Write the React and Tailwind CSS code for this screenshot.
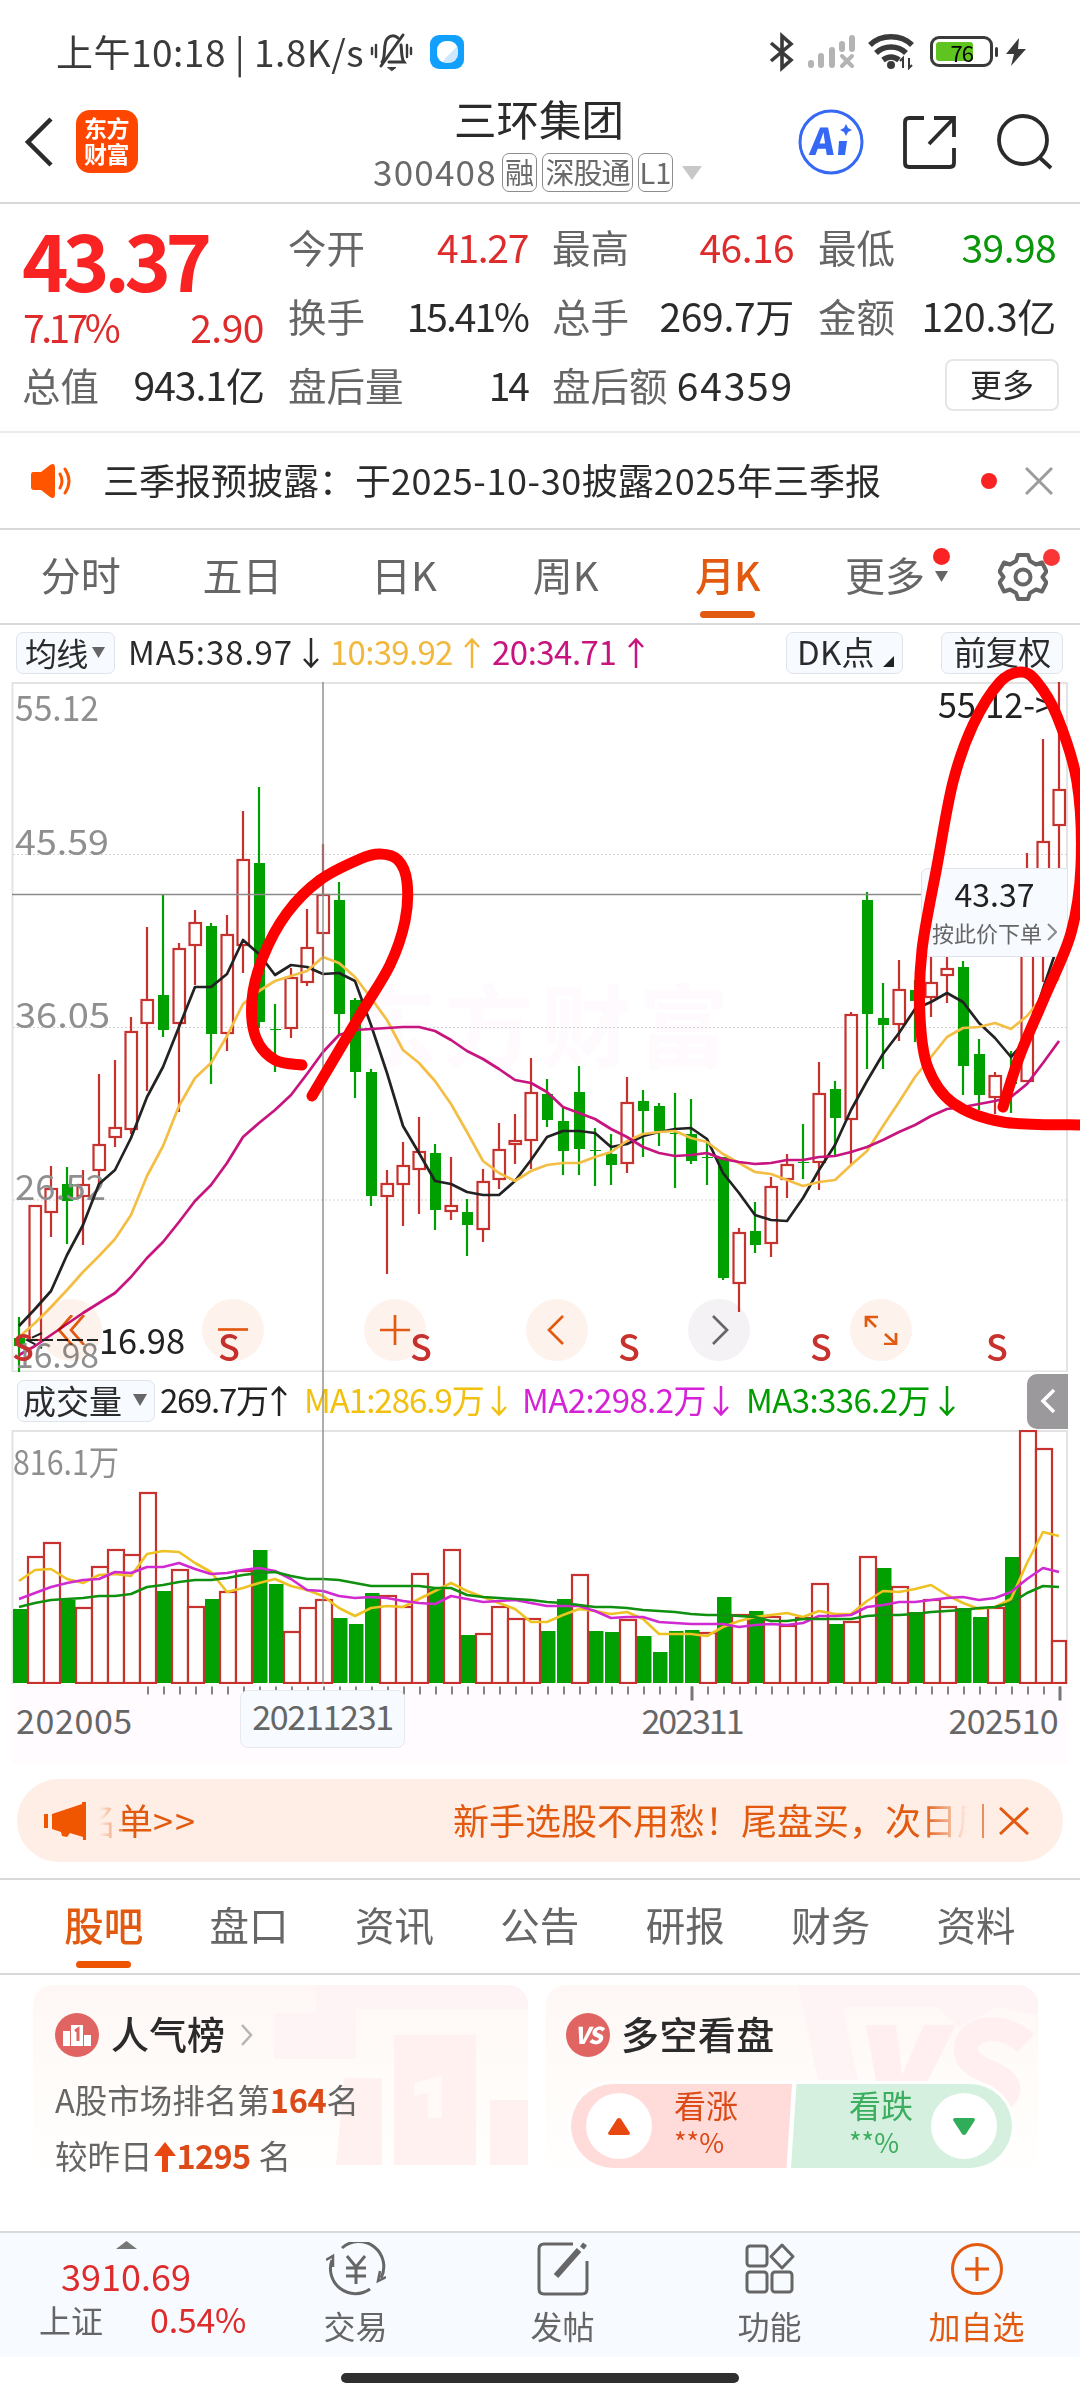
import React from 'react';

// [up, high, bodyTop, bodyBottom, low], in pixels below the chart frame
const candles = [
  [0, 635, 656, 664, 690], [1, 523, 523, 659, 659], [1, 484, 506, 531, 555], [0, 485, 502, 519, 562],
  [1, 488, 502, 515, 563], [1, 392, 462, 489, 502], [1, 378, 445, 456, 465], [1, 335, 349, 448, 452],
  [1, 245, 317, 342, 409], [0, 212, 313, 348, 355], [1, 261, 266, 342, 430], [1, 228, 240, 264, 303],
  [0, 241, 244, 352, 402], [1, 233, 252, 352, 369], [1, 129, 177, 264, 291], [0, 105, 181, 340, 346],
  [0, 322, 347, 348, 390], [1, 286, 295, 347, 356], [1, 227, 265, 301, 304], [1, 162, 212, 252, 274],
  [0, 200, 218, 332, 353], [0, 316, 318, 390, 416], [0, 387, 390, 514, 524], [1, 488, 501, 515, 592],
  [1, 460, 483, 503, 544], [1, 435, 469, 488, 532], [0, 462, 471, 528, 548], [1, 475, 523, 530, 538],
  [0, 517, 530, 543, 574], [1, 487, 499, 548, 560], [1, 441, 467, 498, 507], [1, 432, 458, 463, 482],
  [1, 376, 410, 459, 487], [0, 397, 412, 438, 445], [0, 424, 439, 469, 493], [0, 384, 410, 467, 493],
  [0, 446, 468, 469, 504], [0, 452, 472, 483, 503], [1, 395, 420, 482, 491], [0, 408, 419, 429, 475],
  [0, 421, 424, 449, 464], [0, 411, 451, 452, 506], [0, 417, 452, 479, 482], [0, 458, 475, 476, 503],
  [0, 475, 475, 596, 598], [1, 546, 550, 602, 630], [0, 520, 549, 563, 571], [1, 495, 504, 562, 575],
  [1, 472, 482, 498, 516], [0, 442, 480, 481, 497], [1, 380, 411, 481, 508], [0, 399, 407, 436, 473],
  [1, 330, 332, 438, 482], [0, 210, 218, 332, 387], [0, 301, 336, 343, 387], [1, 278, 307, 343, 359],
  [0, 298, 308, 319, 360], [1, 269, 300, 316, 335], [1, 269, 286, 294, 321], [0, 279, 285, 384, 413],
  [0, 357, 372, 413, 428], [1, 390, 393, 416, 432], [0, 369, 400, 402, 431], [1, 171, 222, 400, 400],
  [1, 57, 159, 260, 300], [1, 0, 107, 144, 220],
];

const ma5 = [
  644, 627, 609, 573, 543, 502, 488, 456, 415, 385, 345, 305, 305, 292, 258, 272, 293, 283, 285, 292, 291, 299,
  343, 391, 444, 471, 499, 502, 510, 513, 513, 499, 478, 455, 449, 449, 451, 465, 462, 454, 450, 447, 446, 457,
  491, 511, 533, 538, 539, 516, 488, 463, 428, 399, 372, 351, 327, 320, 311, 320, 341, 356, 375, 357, 307, 260,
];
const ma10 = [
  655, 641, 625, 608, 590, 574, 557, 533, 494, 464, 424, 396, 381, 354, 322, 309, 299, 294, 289, 275, 281, 295,
  316, 338, 368, 381, 399, 422, 450, 479, 491, 499, 489, 483, 481, 481, 475, 470, 459, 452, 450, 449, 456, 460,
  472, 481, 490, 492, 498, 504, 500, 498, 483, 469, 444, 420, 395, 375, 355, 346, 345, 341, 347, 334, 314, 296,
];
const ma20 = [
  673, 664, 653, 642, 631, 621, 611, 595, 576, 560, 540, 519, 503, 481, 455, 441, 428, 413, 392, 370, 353, 348,
  347, 346, 345, 345, 349, 358, 369, 377, 387, 398, 401, 410, 425, 431, 437, 447, 455, 465, 471, 474, 473, 471,
  477, 480, 482, 481, 478, 478, 475, 474, 470, 465, 458, 450, 443, 434, 427, 425, 422, 419, 415, 402, 381, 359,
];

// positive = rising month, negative = falling month
const volumes = [
  -74, 127, 141, -83, 76, 117, 134, 129, 191, -92, 114, 77, -84, 92, 113, -133, -99, 52, 76, 84, -65, -59,
  -90, 88, 77, 110, -94, 134, -48, 50, 77, 65, 65, -52, -84, 109, -52, -51, 64, -47, -31, -52, -53, 51,
  -86, 69, -72, 67, 58, 66, 100, -59, 62, 127, -115, 97, -71, 84, 77, -75, -66, 76, -126, 253, 235, 43,
];
const vol1 = [
  151, 140, 139, 149, 153, 145, 144, 146, 124, 121, 122, 133, 142, 162, 158, 153, 149, 156, 160, 166, 178, 186,
  178, 176, 177, 169, 161, 153, 161, 167, 173, 179, 192, 192, 185, 179, 181, 184, 182, 189, 204, 204, 204, 206,
  197, 191, 187, 185, 183, 187, 181, 184, 184, 171, 161, 162, 159, 155, 165, 173, 179, 177, 169, 133, 102, 106,
];
const vol2 = [
  169, 163, 157, 153, 150, 149, 142, 143, 137, 137, 133, 139, 144, 143, 140, 138, 141, 149, 160, 161, 166, 168,
  167, 168, 171, 173, 174, 166, 169, 172, 171, 170, 173, 176, 176, 176, 181, 188, 187, 187, 192, 193, 194, 194,
  194, 197, 195, 194, 195, 193, 186, 186, 185, 177, 175, 172, 172, 170, 168, 167, 170, 168, 162, 149, 138, 142,
];
const vol3 = [
  177, 173, 170, 169, 168, 166, 166, 164, 157, 155, 152, 150, 150, 148, 145, 143, 142, 146, 149, 149, 150, 153,
  156, 156, 156, 156, 158, 158, 165, 167, 168, 169, 170, 172, 173, 175, 177, 177, 178, 180, 181, 182, 184, 185,
  185, 186, 187, 191, 191, 189, 189, 189, 189, 186, 185, 185, 184, 182, 181, 180, 178, 177, 173, 163, 156, 157,
];

const RED = '#c7322f';
const GREEN = '#00a000';
const cx = (i) => 19 + i * 16;
const line = (arr) => arr.map((y, i) => `${cx(i)},${y}`).join(' ');

// smooth curve through a list of points
const smooth = (pts) => {
  let d = `M${pts[0][0]} ${pts[0][1]}`;
  for (let i = 0; i < pts.length - 1; i++) {
    const p0 = pts[i - 1] || pts[i];
    const p1 = pts[i];
    const p2 = pts[i + 1];
    const p3 = pts[i + 2] || p2;
    d += `C${p1[0] + (p2[0] - p0[0]) / 6} ${p1[1] + (p2[1] - p0[1]) / 6} ${p2[0] - (p3[0] - p1[0]) / 6} ${p2[1] - (p3[1] - p1[1]) / 6} ${p2[0]} ${p2[1]}`;
  }
  return d;
};

const loopLeft = smooth([
  [302, 1065], [275, 1060], [256, 1038], [252, 1000], [263, 957], [287, 913], [320, 880], [360, 859],
  [380, 854], [398, 860], [407, 882], [405, 921], [390, 965], [360, 1015], [312, 1096],
]);
const loopRight = smooth([
  [1003, 1107], [1020, 1055], [1046, 994], [1071, 933], [1081, 866], [1077, 782], [1057, 716], [1037, 682],
  [1021, 672], [1000, 682], [973, 725], [953, 782], [937, 866], [922, 950], [920, 1017], [928, 1068],
  [953, 1103], [1003, 1122], [1085, 1125],
]);

function StatusBar() {
  return (
    <div className="flex h-[100px] items-center pl-[56px] pt-[3px] text-[#3a3a3a]">
      <span className="w-[314px] whitespace-nowrap text-[37px] leading-none tracking-[0.500px]">上午10:18 | 1.8K/s</span>
      <svg width="44" height="40" viewBox="0 0 44 40" fill="none" stroke="currentColor" strokeWidth="3" strokeLinecap="round">
        <path d="M12 30C16 26 13 11 17 7c3-4 8-4 11-1M31 13c1 7 0 13 3 17H19" />
        <path d="M33 3L11 34" />
        <path d="M18 35.500h8l-4 3z" fill="currentColor" strokeWidth="1" />
        <path d="M6 13v12M2 16v6M37 13v12M41 16v6" strokeWidth="2.400" />
      </svg>
      <div className="ml-[16px] flex h-[34px] w-[34px] items-center justify-center rounded-[9px] bg-[#12a0ff]">
        <div className="h-[22px] w-[21px] rounded-[9px] bg-gradient-to-br from-white from-60% to-[#cfe8fb] to-60%"></div>
      </div>
      <svg className="ml-[304px]" width="28" height="40" viewBox="0 0 28 40" fill="none" stroke="currentColor" strokeWidth="3.600">
        <path d="M3 11l20 17-9 8V4l9 8L3 29" />
      </svg>
      <svg className="ml-[12px]" width="48" height="34" viewBox="0 0 48 34" stroke="#b4b4b4" strokeWidth="6" fill="none" strokeLinecap="round">
        <path d="M3 28v2M13 21v9M24 15v15M34 9v5M44 3v11" />
        <path d="M34 21l10 10M44 21L34 31" strokeWidth="4" />
      </svg>
      <svg className="ml-[12px]" width="48" height="36" viewBox="0 0 48 36" stroke="currentColor" strokeWidth="5.500" fill="none">
        <path d="M2 11C13 0 33 0 44 11M8 19c8-8 22-8 30 0M15 26c5-4 11-4 16 0" />
        <circle cx="23" cy="31" r="3" fill="currentColor" strokeWidth="2" />
        <path d="M35 34V24l-3 3M41 24v10l3-3" strokeWidth="2" />
      </svg>
      <div className="ml-[14px] flex h-[31px] w-[63px] items-center rounded-[9px] border-[3px] border-[#3a3a3a] p-[3px]">
        <div className="flex h-full w-[37px] items-center justify-end rounded-[3px] bg-[#5fc41f] text-[22px] leading-none tracking-[-1px] text-black">76</div>
      </div>
      <div className="ml-[2px] h-[10px] w-[3px] rounded bg-[#3a3a3a]"></div>
      <svg className="ml-[8px]" width="20" height="28" viewBox="0 0 20 28" fill="currentColor"><path d="M13 0L0 16h8l-3 12L20 11h-8z" /></svg>
    </div>
  );
}

function Header() {
  return (
    <div className="flex h-[104px] items-start border-b-2 border-[#d9d9d9] pl-[24px] text-[#2b2b2b]">
      <svg className="mt-[17px]" width="30" height="50" viewBox="0 0 30 50" fill="none" stroke="currentColor" strokeWidth="4.500"><path d="M27 2L4 25l23 23" /></svg>
      <div className="ml-[22px] mt-[10px] flex h-[63px] w-[62px] items-center justify-center rounded-[14px] bg-[#ff4600]">
        <span className="w-[46px] pb-[3px] text-[23px] font-bold leading-[26px] tracking-[-0.500px] text-white">东方财富</span>
      </div>
      <div className="ml-[235px] w-[332px]">
        <div className="mt-[-3px] pl-[81px] text-[42.500px] leading-[42px]">三环集团</div>
        <div className="mt-[14px] flex h-[39px] items-center text-[#6a6a6a]">
          <span className="w-[129px] pb-[4px] text-[35px] leading-none tracking-[1.200px]">300408</span>
          <div className="flex gap-[5px] text-[29px] leading-none">
            <span className="flex h-[39px] w-[35px] items-center justify-center rounded-[7px] border-[1.500px] border-[#8c8c8c] pb-[3px]">融</span>
            <span className="flex h-[39px] w-[91px] items-center justify-center rounded-[7px] border-[1.500px] border-[#8c8c8c] pb-[3px] tracking-[-1px]">深股通</span>
            <span className="flex h-[39px] w-[35px] items-center justify-center rounded-[7px] border-[1.500px] border-[#8c8c8c] pb-[3px]">L1</span>
          </div>
          <svg className="ml-[9px]" width="20" height="14" viewBox="0 0 20 14" fill="#c8c8c8"><path d="M0 0h20L10 14z" /></svg>
        </div>
      </div>
      <svg className="ml-[93px] mt-[8px]" width="66" height="68" viewBox="0 0 66 68">
        <circle cx="33" cy="34" r="31" fill="none" stroke="#3568f5" strokeWidth="3" />
        <text x="12" y="47" fontSize="37" fontWeight="900" fill="#3568f5" transform="skewX(-6) translate(4 0)">A</text>
        <path d="M41 33h8l-2 14h-7z" fill="#3568f5" />
        <path d="M48 16l2 4 4 2-4 2-2 4-2-4-4-2 4-2z" fill="#3568f5" />
      </svg>
      <svg className="ml-[39px] mt-[15px]" width="54" height="54" viewBox="0 0 54 54" fill="none" stroke="currentColor" strokeWidth="3.800">
        <path d="M21 3H6Q2 3 2 7v41q0 4 4 4h41q4 0 4-4V33" />
        <path d="M31 3h20v19M51 3L26 29" />
      </svg>
      <svg className="ml-[40px] mt-[14px]" width="56" height="56" viewBox="0 0 56 56" fill="none" stroke="currentColor" strokeWidth="3.800">
        <circle cx="26" cy="26" r="24" />
        <path d="M42 43l12 11" />
      </svg>
    </div>
  );
}

function Stat({ label, value, color = 'text-[#2b2b2b]', spacing = 'tracking-[-1.300px]' }) {
  return (
    <div className="flex items-center justify-between whitespace-nowrap">
      <span className="-ml-px text-[38.500px] leading-none text-[#666]">{label}</span>
      <span className={`text-[39px] leading-none ${color} ${spacing}`}>{value}</span>
    </div>
  );
}

function Quote() {
  return (
    <div className="grid h-[229px] auto-rows-[69px] grid-cols-[241px_239px_241px_237px] gap-x-[25px] border-b-2 border-[#ebebeb] pl-[23px] pt-[8px]">
      <div className="row-span-2">
        <div className="-ml-px text-[79px] font-bold leading-[92px] tracking-[-5.500px] text-[#fa2323]">43.37</div>
        <div className="flex justify-between text-[39px] leading-[44px] text-[#de2c2c]">
          <span className="tracking-[-3.500px]">7.17%</span>
          <span className="tracking-[-0.500px]">2.90</span>
        </div>
      </div>
      <Stat label="今开" value="41.27" color="text-[#de2c2c]" />
      <Stat label="最高" value="46.16" color="text-[#de2c2c]" spacing="tracking-[-0.600px]" />
      <Stat label="最低" value="39.98" color="text-[#0a960a]" spacing="tracking-[-0.600px]" />
      <Stat label="换手" value="15.41%" spacing="tracking-[-2px]" />
      <Stat label="总手" value="269.7万" spacing="tracking-[-0.300px]" />
      <Stat label="金额" value="120.3亿" spacing="tracking-[-0.300px]" />
      <Stat label="总值" value="943.1亿" spacing="tracking-[-1px]" />
      <Stat label="盘后量" value="14" spacing="tracking-[-2px]" />
      <Stat label="盘后额" value="64359" spacing="tracking-[1.800px]" />
      <div className="flex items-center justify-end">
        <span className="mr-[-3px] flex h-[52px] w-[114px] items-center justify-center rounded-[8px] border-2 border-[#e6e6e6] pb-[3px] text-[32px] leading-none text-[#2b2b2b]">更多</span>
      </div>
    </div>
  );
}

function Notice() {
  return (
    <div className="flex h-[97px] items-center border-b-2 border-[#d9d9d9] pl-[31px]">
      <svg width="42" height="34" viewBox="0 0 42 34" fill="#ff5500">
        <path d="M2 8h8L19 1q5-3 5 3v26q0 6-5 3l-9-7H3q-3 0-3-3V11q0-3 2-3z" />
        <path d="M29 10q4 7 0 14M34 5q8 12 0 24" fill="none" stroke="#ff5500" strokeWidth="3" strokeLinecap="round" />
      </svg>
      <span className="ml-[30px] w-[801px] whitespace-nowrap pb-[3px] text-[36px] leading-none text-[#2b2b2b]">
        三季报预披露：于<span className="tracking-[0.600px]">2025-10-30</span>披露<span className="tracking-[0.800px]">2025</span>年三季报
      </span>
      <span className="ml-[77px] h-[16px] w-[16px] rounded-full bg-[#fa2323]"></span>
      <svg className="ml-[28px]" width="28" height="28" viewBox="0 0 28 28" stroke="#9c9c9c" strokeWidth="3"><path d="M1 1l26 26M27 1L1 27" /></svg>
    </div>
  );
}

const periods = ['分时', '五日', '日K', '周K', '月K'];

function PeriodTabs() {
  return (
    <div className="flex h-[95px] border-b-2 border-[#d9d9d9] text-[40px] leading-[88px] text-[#666]">
      {periods.map((p) => (
        <div key={p} className={`flex w-[161.600px] flex-col items-center ${p === '月K' ? 'font-medium text-[#e25a10]' : ''}`}>
          <span className={`h-[81px] ${p === '月K' ? 'tracking-[-1px]' : ''}`}>{p}</span>
          {p === '月K' && <span className="h-[7px] w-[55px] rounded-full bg-[#e25a10]"></span>}
        </div>
      ))}
      <div className="relative ml-[37px] flex">
        <span>更多</span>
        <svg className="ml-[10px] mt-[41px]" width="13" height="11" viewBox="0 0 13 11" fill="#666"><path d="M0 0h13L6.500 11z" /></svg>
        <span className="absolute right-[-2px] top-[18px] h-[17px] w-[17px] rounded-full bg-[#fa2323]"></span>
      </div>
      <div className="relative ml-[50px] mt-[22px] h-[50px] w-[50px]">
        <svg width="50" height="50" viewBox="0 0 50 50" fill="none" stroke="#666" strokeWidth="4" strokeLinejoin="round">
          <path d="M20 3h10l2 6 6 3.500 6-2 4.500 9-4 5.500 4 5.500-4.500 9-6-2-6 3.500-2 6H20l-2-6-6-3.500-6 2-4.500-9 4-5.500-4-5.500 4.500-9 6 2L18 9z" />
          <circle cx="25" cy="25" r="7.500" />
        </svg>
        <span className="absolute right-[-12px] top-[-3px] h-[17px] w-[17px] rounded-full bg-[#fa3535]"></span>
      </div>
    </div>
  );
}

function Pill({ className, children }) {
  return (
    <span className={`flex h-[42px] items-center rounded-[7px] border border-[#dfe4ec] bg-[#f7faff] text-[#2b2b2b] ${className}`}>{children}</span>
  );
}

function Arrow({ up, className = '' }) {
  return (
    <svg className={className} width="16" height="30" viewBox="0 0 16 30" fill="none" stroke="currentColor" strokeWidth="2.500">
      <path d={up ? 'M8 30V2M1 9l7-7.500L15 9' : 'M8 0v28M1 21l7 7.500 7-7.500'} />
    </svg>
  );
}

function Legend({ color, width, up, children }) {
  return (
    <span className={`flex items-center justify-between whitespace-nowrap ${color} ${width}`}>
      <span className="pb-[3px]">{children}</span>
      <Arrow up={up} />
    </span>
  );
}

function MaRow() {
  return (
    <div className="flex h-[57px] items-center pb-[2px] pl-[16px] text-[33px] leading-none tracking-[-0.700px]">
      <Pill className="w-[99px] pb-[2px] pl-[8px] text-[32px] tracking-[-0.700px]">
        均线
        <svg className="ml-[4px] mt-[2px]" width="13" height="11" viewBox="0 0 13 11" fill="#666"><path d="M0 0h13L6.500 11z" /></svg>
      </Pill>
      <Legend color="ml-[13px] text-[#2b2b2b]" width="w-[191px] tracking-[0.900px]">MA5:38.97</Legend>
      <Legend color="ml-[11px] text-[#f2b83d]" width="w-[150px]" up>10:39.92</Legend>
      <Legend color="ml-[12px] text-[#c7147f]" width="w-[152px] tracking-[-0.500px]" up>20:34.71</Legend>
      <Pill className="ml-[142px] w-[117px] pb-[2px] pl-[10px] tracking-[0.300px]">
        DK点
        <svg className="ml-[8px] mt-[19px]" width="11" height="11" viewBox="0 0 11 11" fill="#222"><path d="M11 0v11H0z" /></svg>
      </Pill>
      <Pill className="ml-[38px] w-[122px] justify-center pb-[2px]">前复权</Pill>
    </div>
  );
}

function Label({ x, y, w, size = 35, fill = '#8f8f8f', children }) {
  return <text x={x} y={y} textLength={w} lengthAdjust="spacingAndGlyphs" fontSize={size} fill={fill}>{children}</text>;
}

function KLine() {
  return (
    <svg className="block" width="1080" height="690" viewBox="0 0 1080 690">
      <text x="347" y="378" fontSize="90" fontWeight="700" letterSpacing="7" fill="#fefafe">东方财富</text>
      <path d="M12.500 1V689.500H1067V1z" fill="none" stroke="#e3e3e3" strokeWidth="2" />
      {[172.500, 345.500, 518].map((y) => <path key={y} d={`M13 ${y}H1067`} stroke="#d4d4d4" strokeDasharray="2 2" />)}
      <Label x="15" y="39" w="84">55.12</Label>
      <Label x="15" y="173" w="94">45.59</Label>
      <Label x="15" y="346" w="95">36.05</Label>
      {candles.map(([up, h, t, b, l], i) => (
        <g key={i} stroke={up ? RED : GREEN} strokeWidth="2.200">
          <path d={`M${cx(i)} ${h}V${t}M${cx(i)} ${b}V${l}`} />
          {up
            ? <rect x={cx(i) - 5.500} y={t + 1} width="11.500" height={Math.max(b - t - 2, 1)} fill="none" />
            : <rect x={cx(i) - 5} y={t} width="11" height={b - t} fill={GREEN} stroke="none" />}
        </g>
      ))}
      <Label x="15" y="518" w="91">26.52</Label>
      <g fill="none" strokeWidth="2.700" strokeLinejoin="round">
        <polyline points={line(ma5)} stroke="#222" />
        <polyline points={line(ma10)} stroke="#f4be45" />
        <polyline points={line(ma20)} stroke="#c7147f" />
      </g>
      <path d="M42 651l-15 7 15 8M27 658h72" stroke="#222" strokeWidth="2" strokeDasharray="11 4" fill="none" />
      <Label x="15" y="686" w="84">16.98</Label>
      <Label x="99" y="672" w="86" fill="#222">16.98</Label>
      <Label x="938" y="36" w="116" fill="#222">55.12-&gt;</Label>
      {[23, 229, 421, 629, 821, 997].map((x) => (
        <text key={x} x={x} y="679" textAnchor="middle" fontSize="36" fontWeight="500" fill="#c7322f">S</text>
      ))}
      <path d="M12 212.500H1067" stroke="#8a8a8a" strokeWidth="1.500" />
    </svg>
  );
}

const controls = [
  'M26 0L13 15l13 15M38 0L25 15l13 15',
  'M10 14.500h30',
  'M10 15h30M25 0v30',
  'M31 1L17 15l14 14',
  'M19 1l14 14-14 14',
  'M10 12V2h12M10 2l10 10M40 18v11H28M40 29L29 19',
];

function Controls() {
  return (
    <div className="absolute left-[40px] top-[617px] flex gap-[100px] mix-blend-multiply">
      {controls.map((d, i) => (
        <span key={i} className={`flex h-[62px] w-[62px] items-center justify-center rounded-full ${i === 4 ? 'bg-[#f5f2f6] text-[#666]' : 'bg-[#fef2ed] text-[#e25a10]'}`}>
          <svg width="50" height="30" viewBox="0 0 50 30" fill="none" stroke="currentColor" strokeWidth="2.700"><path d={d} /></svg>
        </span>
      ))}
    </div>
  );
}

function PriceTip() {
  return (
    <div className="absolute left-[921px] top-[186px] h-[89px] w-[147px] rounded-l-[7px] border border-[#dfe4ec] bg-[#f7faff] text-center">
      <div className="pt-[4px] text-[32px] leading-[40px] text-[#222]">43.37</div>
      <div className="flex items-center justify-end gap-[5px] pr-[10px] text-[22px] leading-[38px] text-[#666]">
        <span>按此价下单</span>
        <svg width="10" height="18" viewBox="0 0 10 18" fill="none" stroke="#888" strokeWidth="2"><path d="M1 1l8 8-8 8" /></svg>
      </div>
    </div>
  );
}

function VolumeHeader() {
  return (
    <div className="flex h-[58px] items-center pl-[17px] text-[33px] leading-none tracking-[-1px]">
      <Pill className="w-[138px] pb-[2px] pl-[5px] tracking-normal">
        成交量
        <svg className="ml-[11px]" width="14" height="12" viewBox="0 0 13 11" fill="#666"><path d="M0 0h13L6.500 11z" /></svg>
      </Pill>
      <Legend color="ml-[5px] text-[#222]" width="w-[127px] tracking-[-1.300px]" up>269.7万</Legend>
      <Legend color="ml-[17px] text-[#f2c00f]" width="w-[203px]">MA1:286.9万</Legend>
      <Legend color="ml-[15px] text-[#d622d6]" width="w-[207px] tracking-[-0.600px]">MA2:298.2万</Legend>
      <Legend color="ml-[17px] text-[#009c00]" width="w-[209px] tracking-[-0.600px]">MA3:336.2万</Legend>
      <span className="ml-[72px] flex h-[55px] w-[41px] items-center justify-center rounded-l-[10px] bg-[#9b999b]">
        <svg width="16" height="26" viewBox="0 0 16 26" fill="none" stroke="#fff" strokeWidth="3.500"><path d="M14 2L3 13l11 11" /></svg>
      </span>
    </div>
  );
}

function Volume() {
  return (
    <svg className="block" width="1080" height="254" viewBox="0 0 1080 254">
      <path d="M12.500 254V1H1067V254" fill="none" stroke="#e3e3e3" strokeWidth="2" />
      <Label x="13" y="45" w="106" size={34}>816.1万</Label>
      {volumes.map((v, i) => (v > 0
        ? <rect key={i} x={cx(i) - 7} y={254 - v} width={i === 65 ? 14 : 16} height={v - 1} fill="#fff" stroke={RED} strokeWidth="2.200" />
        : <rect key={i} x={cx(i) - 6} y={253 + v} width="14.500" height={-v} fill={GREEN} />))}
      <g fill="none" strokeWidth="2.600" strokeLinejoin="round">
        <polyline points={line(vol1)} stroke="#efc223" />
        <polyline points={line(vol2)} stroke="#d02ad0" />
        <polyline points={line(vol3)} stroke="#10900f" />
      </g>
    </svg>
  );
}

function Axis() {
  return (
    <div className="relative ml-[12px] h-[79px] w-[1056px] bg-[#fffbff] text-[34px] leading-none text-[#666]">
      <svg className="absolute left-0 top-0" width="1056" height="20" viewBox="12 0 1056 20" stroke="#777">
        {candles.map((_, i) => i > 7 && <path key={i} d={`M${cx(i) + 1} 2.500v8`} strokeWidth="1.800" />)}
        <path d="M692 2.500v14M1060 2.500v14" strokeWidth="3" />
      </svg>
      <div className="flex h-[72px] items-center justify-between pl-[4px] pr-[10px]">
        <span className="w-[224px] tracking-[0.600px]">202005</span>
        <span className="relative -top-[1px] flex h-[58px] w-[165px] items-center justify-center rounded-[8px] border border-[#e6eaf0] bg-[#f7faff] pb-[6px] tracking-[-1.300px]">20211231</span>
        <span className="ml-[132px] w-[310px] text-center tracking-[-2px]">202311</span>
        <span className="flex-1 text-right tracking-[-0.600px]">202510</span>
      </div>
    </div>
  );
}

function Banner() {
  return (
    <div className="border-b-2 border-[#d9d9d9] pb-[16px] pl-[17px] pt-[16px]">
      <div className="flex h-[83px] w-[1046px] items-center rounded-full bg-[#ffeee6] pl-[27px] text-[#e25a10]">
        <svg width="43" height="38" viewBox="0 0 43 38" fill="#f05500">
          <path d="M0 12h4v14H0zM8 12L38 2v-2h4v38h-3v-3l-13-4-3 4-5-1-1-4-9-3z" />
        </svg>
        <div className="relative ml-[12px] flex w-[880px] overflow-hidden whitespace-nowrap pb-[4px] text-[36px] leading-[44px]">
          <span className="ml-[-18px]">名单<span className="tracking-[2px]">&gt;&gt;</span></span>
          <span className="absolute left-[354px]">新手选股不用愁！尾盘买，次日尾</span>
          <span className="absolute left-0 top-0 h-full w-[24px] bg-gradient-to-r from-[#ffeee6] to-[#ffeee6]/30"></span>
          <span className="absolute right-0 top-0 h-full w-[56px] bg-gradient-to-r from-[#ffeee6]/0 to-[#ffeee6] to-80%"></span>
        </div>
        <span className="ml-[3px] h-[34px] w-[2px] bg-[#e98e5c]"></span>
        <svg className="ml-[15px]" width="30" height="28" viewBox="0 0 30 28" stroke="currentColor" strokeWidth="3"><path d="M1 1l28 26M29 1L1 27" /></svg>
      </div>
    </div>
  );
}

const sections = ['股吧', '盘口', '资讯', '公告', '研报', '财务', '资料'];

function SectionTabs() {
  return (
    <div className="flex h-[95px] border-b-2 border-[#d9d9d9] pl-[31px] text-[39.500px] leading-[88px] text-[#666]">
      {sections.map((s, i) => (
        <div key={s} className={`flex w-[145.400px] flex-col items-center ${i === 0 ? 'font-medium text-[#e25a10]' : ''}`}>
          <span className="h-[81px]">{s}</span>
          {i === 0 && <span className="h-[7px] w-[55px] rounded-full bg-[#ee5500]"></span>}
        </div>
      ))}
    </div>
  );
}

function Cards() {
  return (
    <div className="flex h-[256px] gap-[18px] pl-[33px] pt-[10px]">
      <div className="relative h-[200px] w-[495px] overflow-hidden rounded-t-[20px] bg-gradient-to-b from-[#fef7f5] via-[#fffcf9] to-white pl-[22px]">
        <svg className="absolute right-0 top-0" width="260" height="190" viewBox="0 0 260 190">
          <path d="M48 0h212v24H88v50H6V28h42z" fill="#fff4f5" />
          <path d="M126 50h82v130h-82zM76 93h38v87H68zM222 115h38v65h-38z" fill="#fff1f0" />
          <path d="M146 98l28-7v42h-14v-25l-14 3z" fill="#fffaf8" />
        </svg>
        <div className="relative flex h-[100px] items-center text-[38px] font-medium leading-none text-[#2b2b2b]">
          <svg width="44" height="44" viewBox="0 0 44 44">
            <circle cx="22" cy="22" r="22" fill="#e06462" />
            <path d="M8 18h7v15H8zM16 12h12v21H16zM29 22h7v11h-7z" fill="#fff" />
            <path d="M20 18l3-2v12" stroke="#e06462" strokeWidth="3" fill="none" />
          </svg>
          <span className="ml-[12px] pb-[4px]">人气榜</span>
          <svg className="ml-[15px]" width="13" height="22" viewBox="0 0 13 22" fill="none" stroke="#b5b5b5" strokeWidth="2.500"><path d="M2 1l9 10-9 10" /></svg>
        </div>
        <div className="relative whitespace-nowrap text-[32.500px] leading-[56px] text-[#666]">
          <div className="-mt-[14px]">A股市场排名第<b className="font-bold tracking-[-0.300px] text-[#dc4a17]">164</b>名</div>
          <div className="flex items-center">
            较昨日
            <svg className="mt-[4px]" width="24" height="30" viewBox="0 0 24 30" fill="#e8480f"><path d="M12 0l11 14h-8v16H9V14H1z" /></svg>
            <b className="font-bold tracking-[-0.700px] text-[#dc4a17]">1295</b>
            <span className="ml-[8px]">名</span>
          </div>
        </div>
      </div>
      <div className="relative h-[200px] w-[492px] overflow-hidden rounded-t-[20px] bg-gradient-to-b from-[#fef7f5] via-[#fffcf9] to-white pl-[20px]">
        <svg className="absolute right-0 top-0" width="240" height="190" viewBox="0 0 240 190">
          <path d="M0 0h240v30l-40-8-40 20-20-20H45L60 95H20z" fill="#fff4f5" />
          <path d="M68 40h30l6 50 22-50h32l-46 90H84z" fill="#ffeff0" />
          <path d="M228 58c-30-26-64-12-60 10 4 20 44 18 42 38-3 16-30 12-46 0" fill="none" stroke="#ffeff0" strokeWidth="24" />
        </svg>
        <div className="relative flex h-[100px] items-center text-[38px] font-medium leading-none text-[#2b2b2b]">
          <span className="flex h-[44px] w-[44px] items-center justify-center rounded-full bg-[#e06462] pb-[2px] text-[23px] font-black italic leading-none tracking-[-1px] text-white">VS</span>
          <span className="ml-[11px] pb-[4px] tracking-[0.400px]">多空看盘</span>
        </div>
        <div className="relative -mt-[4px] ml-[2px] flex h-[90px] w-[447px] gap-[4px] overflow-hidden rounded-full border-[3px] border-white bg-white leading-none">
          <div className="flex flex-1 items-center bg-[#ffdcda] pl-[15px] text-[#dc4a17] [clip-path:polygon(0_0,100%_0,97.500%_100%,0_100%)]">
            <span className="flex h-[66px] w-[66px] items-center justify-center rounded-full bg-white">
              <svg width="22" height="17" viewBox="0 0 22 17" fill="#e8480f"><path d="M9 1q2-2 4 0l9 14q0 2-2 2H2q-2 0-2-2z" /></svg>
            </span>
            <div className="mb-[9px] ml-[22px]">
              <div className="text-[32px]">看涨</div>
              <div className="mt-[8px] text-[27px] leading-[27px]">**%</div>
            </div>
          </div>
          <div className="-ml-[5px] flex flex-1 items-center justify-end bg-[#d5f0de] pr-[15px] text-[#3cae5f] [clip-path:polygon(2.500%_0,100%_0,100%_100%,0_100%)]">
            <div className="mb-[9px] mr-[18px]">
              <div className="text-[32px]">看跌</div>
              <div className="mt-[8px] text-[27px] leading-[27px]">**%</div>
            </div>
            <span className="flex h-[66px] w-[66px] items-center justify-center rounded-full bg-white">
              <svg width="22" height="17" viewBox="0 0 22 17" fill="#30ad58"><path d="M9 16q2 2 4 0l9-14q0-2-2-2H2Q0 0 0 2z" /></svg>
            </span>
          </div>
        </div>
      </div>
    </div>
  );
}

function NavItem({ label, active, children }) {
  return (
    <div className={`flex w-[207px] flex-col items-center ${active ? 'text-[#e25a10]' : 'text-[#666]'}`}>
      <svg className="mt-[9px]" width="60" height="54" viewBox="0 0 60 54" fill="none" stroke="currentColor" strokeWidth="3">{children}</svg>
      <span className="mt-[13px] text-[32px] leading-none">{label}</span>
    </div>
  );
}

function BottomBar() {
  return (
    <div className="flex h-[126px] border-t-2 border-[#d9d9d9] bg-[#f7faff]">
      <div className="flex w-[252px] flex-col items-center text-[#de2c2c]">
        <svg className="mt-[8px]" width="21" height="8" viewBox="0 0 21 8" fill="#777"><path d="M10.500 0L21 8H0z" /></svg>
        <span className="mt-[6px] text-[36px] leading-[40px]">3910.69</span>
        <div className="ml-[33px] mt-[4px] flex w-[207px] items-center justify-between text-[34px] leading-[40px]">
          <span className="text-[32px] text-[#666]">上证</span>
          <span className="tracking-[-0.300px]">0.54%</span>
        </div>
      </div>
      <NavItem label="交易">
        <path d="M16 6A25 25 0 0 1 55 36M44 47A25 25 0 0 1 6 18" />
        <path d="M0 18l7-4v11M60 35l-8 4 2-10" strokeWidth="2.500" />
        <path d="M21 14l9 11 9-11M30 25v17M20 26h20M20 34h20" />
      </NavItem>
      <NavItem label="发帖">
        <path d="M40 2H11q-5 0-5 5v40q0 5 5 5h38q5 0 5-5V19" />
        <path d="M23 34L46 8" strokeWidth="6" />
        <path d="M49 6l3-4" strokeWidth="5" />
      </NavItem>
      <NavItem label="功能">
        <rect x="7" y="4" width="20" height="20" rx="3" />
        <rect x="7" y="30" width="20" height="20" rx="3" />
        <rect x="32" y="30" width="20" height="20" rx="3" />
        <path d="M42 3l11 11.500L42 26 31 14.500z" strokeLinejoin="round" />
      </NavItem>
      <NavItem label="加自选" active>
        <circle cx="30" cy="27" r="24.500" />
        <path d="M18 27h24M30 15v24" />
      </NavItem>
    </div>
  );
}

export default function App() {
  return (
    <div className="relative h-[2400px] w-[1080px] overflow-hidden bg-white font-['Noto_Sans_CJK_SC',sans-serif]">
      <StatusBar />
      <Header />
      <Quote />
      <Notice />
      <PeriodTabs />
      <MaRow />
      <div className="relative">
        <KLine />
        <Controls />
        <PriceTip />
        <VolumeHeader />
        <Volume />
        <span className="absolute left-[322px] top-0 h-[1003px] w-[2px] bg-[#8a8a8a]/70"></span>
      </div>
      <Axis />
      <Banner />
      <SectionTabs />
      <Cards />
      <BottomBar />
      <div className="mx-auto mt-[16px] h-[10px] w-[398px] rounded-full bg-[#2f2f2f]"></div>
      {/* hand-drawn marker loops */}
      <svg className="pointer-events-none absolute left-0 top-0" width="1080" height="2400" viewBox="0 0 1080 2400" fill="none" stroke="#ff0000" strokeWidth="11" strokeLinecap="round" strokeLinejoin="round">
        <path d={loopLeft} />
        <path d={loopRight} />
      </svg>
    </div>
  );
}
